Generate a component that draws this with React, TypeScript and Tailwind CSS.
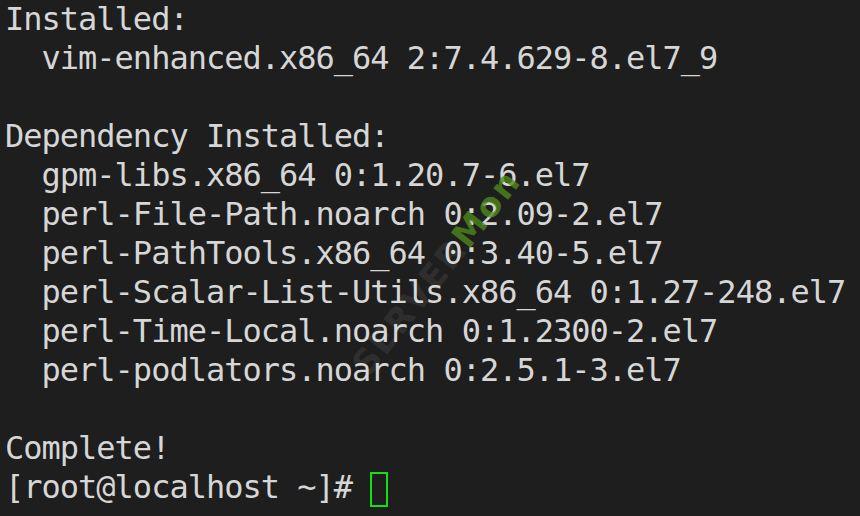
const lines = [
  'Installed:',
  '  vim-enhanced.x86_64 2:7.4.629-8.el7_9',
  '',
  'Dependency Installed:',
  '  gpm-libs.x86_64 0:1.20.7-6.el7',
  '  perl-File-Path.noarch 0:2.09-2.el7',
  '  perl-PathTools.x86_64 0:3.40-5.el7',
  '  perl-Scalar-List-Utils.x86_64 0:1.27-248.el7',
  '  perl-Time-Local.noarch 0:1.2300-2.el7',
  '  perl-podlators.noarch 0:2.5.1-3.el7',
  '',
  'Complete!',
]

export default function App() {
  return (
    <div
      className="relative w-[860px] h-[516px] overflow-hidden bg-[#1e1e1e] text-[#d6d6d6] pl-[5px]"
      style={{ fontFamily: '"DejaVu Sans Mono", "Liberation Mono", monospace' }}
    >
      <div className="text-[32px] leading-[39px] tracking-[-1px] whitespace-pre">
        {lines.map((l, i) => (
          <div key={i}>{l === '' ? '\u00a0' : l}</div>
        ))}
        <div className="flex items-center">
          <span>{'[root@localhost ~]# '}</span>
          <span className="inline-block w-[18px] h-[35px] border-2 border-[#12e012] mt-[3px]" />
        </div>
      </div>

      {/* faint watermark across the middle */}
      <div
        className="absolute left-[360px] top-[345px] -rotate-[52deg] origin-left text-[34px] font-bold tracking-[2px] pointer-events-none select-none whitespace-nowrap"
        style={{ fontFamily: '"DejaVu Sans", sans-serif' }}
      >
        <span className="text-white/[0.07]">SERVER</span>
        <span className="text-[#4f8a1a]/80">Mon</span>
      </div>
    </div>
  )
}
